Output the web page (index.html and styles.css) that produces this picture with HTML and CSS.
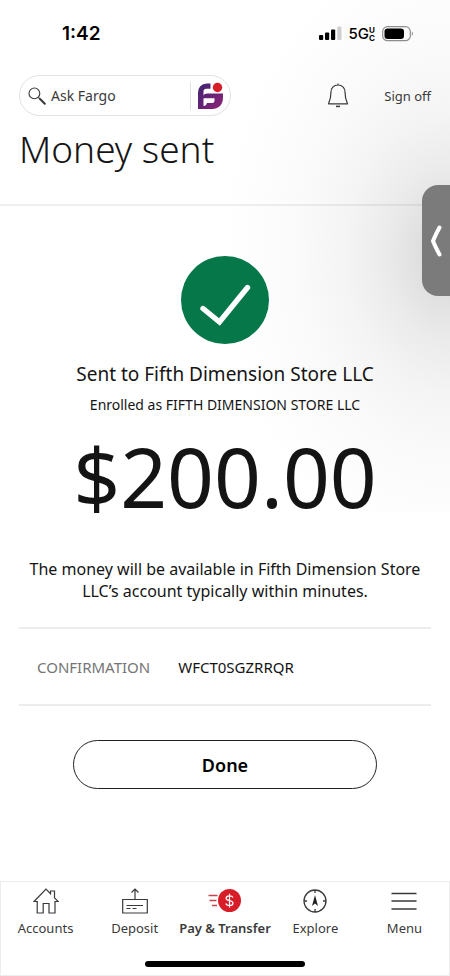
FILE: index.html
```html
<!DOCTYPE html>
<html lang="en">
<head>
<meta charset="utf-8">
<meta name="viewport" content="width=device-width, initial-scale=1">
<title>Money sent</title>
<link rel="stylesheet" href="styles.css">
</head>
<body>
<div class="screen">
  <div class="status">
    <span class="clock">1:42</span>
    <div class="status-right">
      <svg width="23" height="15" viewBox="0 0 23 15" aria-hidden="true">
        <rect x="0" y="9" width="4.200" height="5" rx="1"/>
        <rect x="6" y="6.500" width="4.200" height="7.500" rx="1"/>
        <rect x="12" y="3.500" width="4.200" height="10.500" rx="1"/>
        <rect x="18.300" y="0.500" width="4.200" height="13.500" rx="1" fill="#cfcfcf"/>
      </svg>
      <span class="network">5G<span class="network-sub"><span>U</span><span>C</span></span></span>
      <svg width="32" height="16" viewBox="0 0 32 16" aria-hidden="true">
        <rect x="0.700" y="0.700" width="27.600" height="14" rx="4.800" fill="none" stroke="#8d8d8d" stroke-width="1.200"/>
        <rect x="2.500" y="2.400" width="19.500" height="10.600" rx="3.200"/>
        <path d="M29.800 5.500q2.400 2.200 0 4.400z" fill="#8d8d8d"/>
      </svg>
    </div>
  </div>

  <header class="top">
    <div class="actions">
      <form class="search">
        <svg width="18" height="18" viewBox="0 0 18 18" fill="none" stroke="#3a3a3a" aria-hidden="true">
          <circle cx="6.400" cy="6.400" r="5.400" stroke-width="1.100"/>
          <path d="M10.300 10.300l1.500 1.500" stroke-width="1.100"/>
          <path d="M11.800 11.800l5 5" stroke-width="2" stroke-linecap="round"/>
        </svg>
        <input class="search-input" type="text" aria-label="Ask Fargo" placeholder="Ask Fargo">
        <button class="assistant" type="button" aria-label="Open assistant">
          <svg width="27" height="28" viewBox="0 0 27 28" aria-hidden="true">
            <defs>
              <linearGradient id="fargo" x1="0" y1="0" x2="1" y2="1">
                <stop offset="0" stop-color="#3f2273"/>
                <stop offset="1" stop-color="#8e2578"/>
              </linearGradient>
            </defs>
            <path d="M13.500 1.500H10Q1 2 1 11V27H15Q26 26.500 26 15V11.500H10.500Q6.500 11.500 6.500 14V9.500Q6.500 6.800 9.500 6.800H13.500Z" fill="url(#fargo)"/>
            <path d="M6.500 16.200H17.500V18.500Q17.500 21 15 21H9.800Q9.800 23.500 6.500 24Z" fill="#fff"/>
            <circle cx="20.500" cy="5.500" r="5.400" fill="#fff"/>
            <circle cx="20.500" cy="5.500" r="4.700" fill="#d71e28"/>
          </svg>
        </button>
      </form>
      <div class="links">
        <button class="plain" type="button" aria-label="Notifications">
          <svg width="22" height="25" viewBox="0 0 22 25" fill="none" stroke="#3a3a3a" stroke-width="1.200" aria-hidden="true">
            <path d="M11 0.500V2M11 2C6.500 2 4 5.500 4 9C4 14 3 17.500 1.500 20.800H20.500C19 17.500 18 14 18 9C18 5.500 15.500 2 11 2Z" stroke-linejoin="round"/>
            <path d="M9 23.400H13" stroke-width="1.500"/>
          </svg>
        </button>
        <a class="signoff" href="#">Sign off</a>
      </div>
    </div>
    <h1 class="title">Money sent</h1>
  </header>

  <main class="content">
    <svg class="check" width="88" height="88" viewBox="0 0 88 88" role="img" aria-label="Success">
      <circle cx="44" cy="44" r="44" fill="#057748"/>
      <path d="M22 52.500L38.500 66L66.500 31.500" fill="none" stroke="#fff" stroke-width="5.400" stroke-linecap="round"/>
    </svg>
    <p class="recipient">Sent to Fifth Dimension Store LLC</p>
    <p class="enrolled">Enrolled as FIFTH DIMENSION STORE LLC</p>
    <p class="amount">$200.00</p>
    <p class="note">The money will be available in Fifth Dimension Store LLC’s account typically within minutes.</p>
    <dl class="details">
      <dt>CONFIRMATION</dt>
      <dd>WFCT0SGZRRQR</dd>
    </dl>
    <button class="done" type="button">Done</button>
  </main>

  <button class="drawer" type="button" aria-label="Open side panel">
    <svg width="12" height="32" viewBox="0 0 12 32" fill="none" stroke="#fff" stroke-width="4" stroke-linecap="round" stroke-linejoin="round" aria-hidden="true"><path d="M9.500 2.500Q5 11 3 16Q5 21 9.500 29.500"/></svg>
  </button>

  <nav class="tabs" aria-label="Main">
    <div class="tab-row">
      <a class="tab" href="#">
        <svg width="26" height="26" viewBox="0 0 26 26" fill="none" stroke="#3a3a3a" stroke-width="1.200" aria-hidden="true"><path d="M1 13.500L13 1.200L17.500 5.800V3H21.500V9.800L25.200 13.500H22V25H16V15.500H10.200V25H4.200V13.500Z"/></svg>
        <span>Accounts</span>
      </a>
      <a class="tab" href="#">
        <svg width="26" height="26" viewBox="0 0 26 26" fill="none" stroke="#3a3a3a" stroke-width="1.200" aria-hidden="true"><path d="M0.700 11.500H25.300V25H0.700ZM13 11.500V1M9.500 4.500L13 1L16.500 4.500M4.500 17.500H21M4.500 20.500H8.500M10.500 20.500H14.500"/></svg>
        <span>Deposit</span>
      </a>
      <a class="tab current" href="#" aria-current="page">
        <svg width="34" height="26" viewBox="0 0 34 26" fill="none" aria-hidden="true">
          <path d="M0.500 7.500H9.500M1.500 12.500H8.500M4 17.500H9" stroke="#c4454d" stroke-width="1.300"/>
          <circle cx="21.500" cy="12.500" r="11.500" fill="#d71e28"/>
          <path d="M25 9.500Q24.300 7.800 21.500 7.800Q18.100 7.800 18.100 10.200Q18.100 12 21.500 12.600Q25 13.200 25 15.200Q25 17.500 21.500 17.500Q18.500 17.500 17.800 15.500M21.500 5.800V19.500" stroke="#fff" stroke-width="1.200"/>
        </svg>
        <span>Pay &amp; Transfer</span>
      </a>
      <a class="tab" href="#">
        <svg width="26" height="26" viewBox="0 0 26 26" fill="none" stroke="#3a3a3a" stroke-width="1.300" aria-hidden="true"><circle cx="13" cy="13" r="11"/><path d="M13 2V5M13 21V24M2 13H5M21 13H24"/><path d="M13 7L10 18L13 15.500L16 18Z" fill="#222" stroke="none"/></svg>
        <span>Explore</span>
      </a>
      <a class="tab" href="#">
        <svg width="26" height="26" viewBox="0 0 26 26" stroke="#3a3a3a" stroke-width="1.300" aria-hidden="true"><path d="M0.500 5.500H25.500M0.500 13H25.500M0.500 21H25.500"/></svg>
        <span>Menu</span>
      </a>
    </div>
    <div class="home-bar"></div>
  </nav>
</div>
</body>
</html>
```
FILE: styles.css
```css
* { box-sizing: border-box; }
body {
  margin: 0;
  background: #fff;
  color: #141414;
  font-family: "Noto Sans", "Open Sans", sans-serif;
}
h1, p, dl, dd { margin: 0; }
svg { display: block; flex: none; }
a { color: inherit; text-decoration: none; }
button { font: inherit; color: inherit; background: none; border: 0; padding: 0; cursor: pointer; }

.screen {
  position: relative;
  display: flex;
  flex-direction: column;
  min-height: 100vh;
  background: radial-gradient(ellipse 230px 310px at 100% 254px,
    #d2d2d2 0%, #dedede 12%, #ebebeb 28%, #f4f4f4 45%, #fafafa 65%, #fdfdfd 85%, #fff 100%) no-repeat top / 100% 512px;
}

.status {
  display: flex;
  justify-content: space-between;
  align-items: center;
  height: 67px;
  padding: 0 36px 0 62px;
  font-family: Inter, sans-serif;
  color: #000;
}
.clock { font-size: 19px; font-weight: 600; }
.status-right { display: flex; align-items: center; gap: 7px; }
.network { display: flex; align-items: center; font-size: 15px; font-weight: 500; line-height: 16px; }
.network-sub { display: flex; flex-direction: column; font-size: 8px; font-weight: 700; line-height: 8px; }

.top { padding: 8px 19px 0; height: 139px; border-bottom: 2px solid rgba(0, 0, 0, 0.06); }
.actions { display: flex; justify-content: space-between; align-items: center; }
.search {
  display: flex;
  align-items: center;
  flex: 0 1 212px;
  min-width: 0;
  height: 41px;
  padding: 0 6px 0 8px;
  background: #fff;
  border: 1px solid #e2e2e2;
  border-radius: 21px;
}
.search-input {
  flex: 1;
  width: 0;
  min-width: 0;
  padding: 0 0 0 5px;
  border: 0;
  background: none;
  font: 14px/20px "Noto Sans", sans-serif;
  color: #3a3a3a;
}
.search-input::placeholder { color: #3a3a3a; opacity: 1; }
.assistant { padding-left: 6px; border-left: 1px solid #e2e2e2; }
.links { display: flex; align-items: center; gap: 35px; }
.signoff { font-size: 13px; line-height: 20px; color: #3a3a3a; }
.title { padding-top: 7px; font-size: 37px; line-height: 52px; font-weight: 300; }

.content {
  display: flex;
  flex-direction: column;
  align-items: center;
  padding: 50px 19px 0;
  text-align: center;
}
.recipient { margin-top: 18px; font-size: 19px; line-height: 24px; }
.enrolled { margin-top: 8px; font-size: 14px; line-height: 22px; }
.amount { margin-top: 12px; font-size: 82px; line-height: 96px; }
.note { margin-top: 34px; padding: 0 8px; font-size: 16px; line-height: 22px; }
.details {
  display: flex;
  align-self: stretch;
  align-items: center;
  gap: 28px;
  height: 79px;
  margin-top: 25px;
  padding: 0 18px;
  border: solid #ececec;
  border-width: 2px 0;
  font-size: 15px;
  line-height: 20px;
}
.details dt { color: #757575; }
.done {
  width: 304px;
  max-width: 100%;
  height: 49px;
  margin: 34px 0;
  background: #fff;
  border: 1px solid #222;
  border-radius: 25px;
  font-size: 18px;
  font-weight: 600;
  color: #000;
}

.drawer {
  position: absolute;
  top: 185px;
  right: 0;
  display: flex;
  align-items: center;
  width: 28px;
  height: 111px;
  padding-left: 8px;
  background: #7b7b7b;
  border-radius: 16px 0 0 16px;
}

.tabs {
  margin-top: auto;
  padding: 6px 0 8px;
  border: 1px solid #ededed;
  background: #fff;
}
.tab-row { display: grid; grid-template-columns: repeat(5, 1fr); }
.tab {
  display: flex;
  flex-direction: column;
  align-items: center;
  gap: 4px;
  font-size: 13px;
  line-height: 20px;
  color: #3a3a3a;
  white-space: nowrap;
}
.current { font-weight: 600; }
.home-bar { width: 160px; height: 6px; margin: 23px auto 0; border-radius: 3px; background: #000; }
```
